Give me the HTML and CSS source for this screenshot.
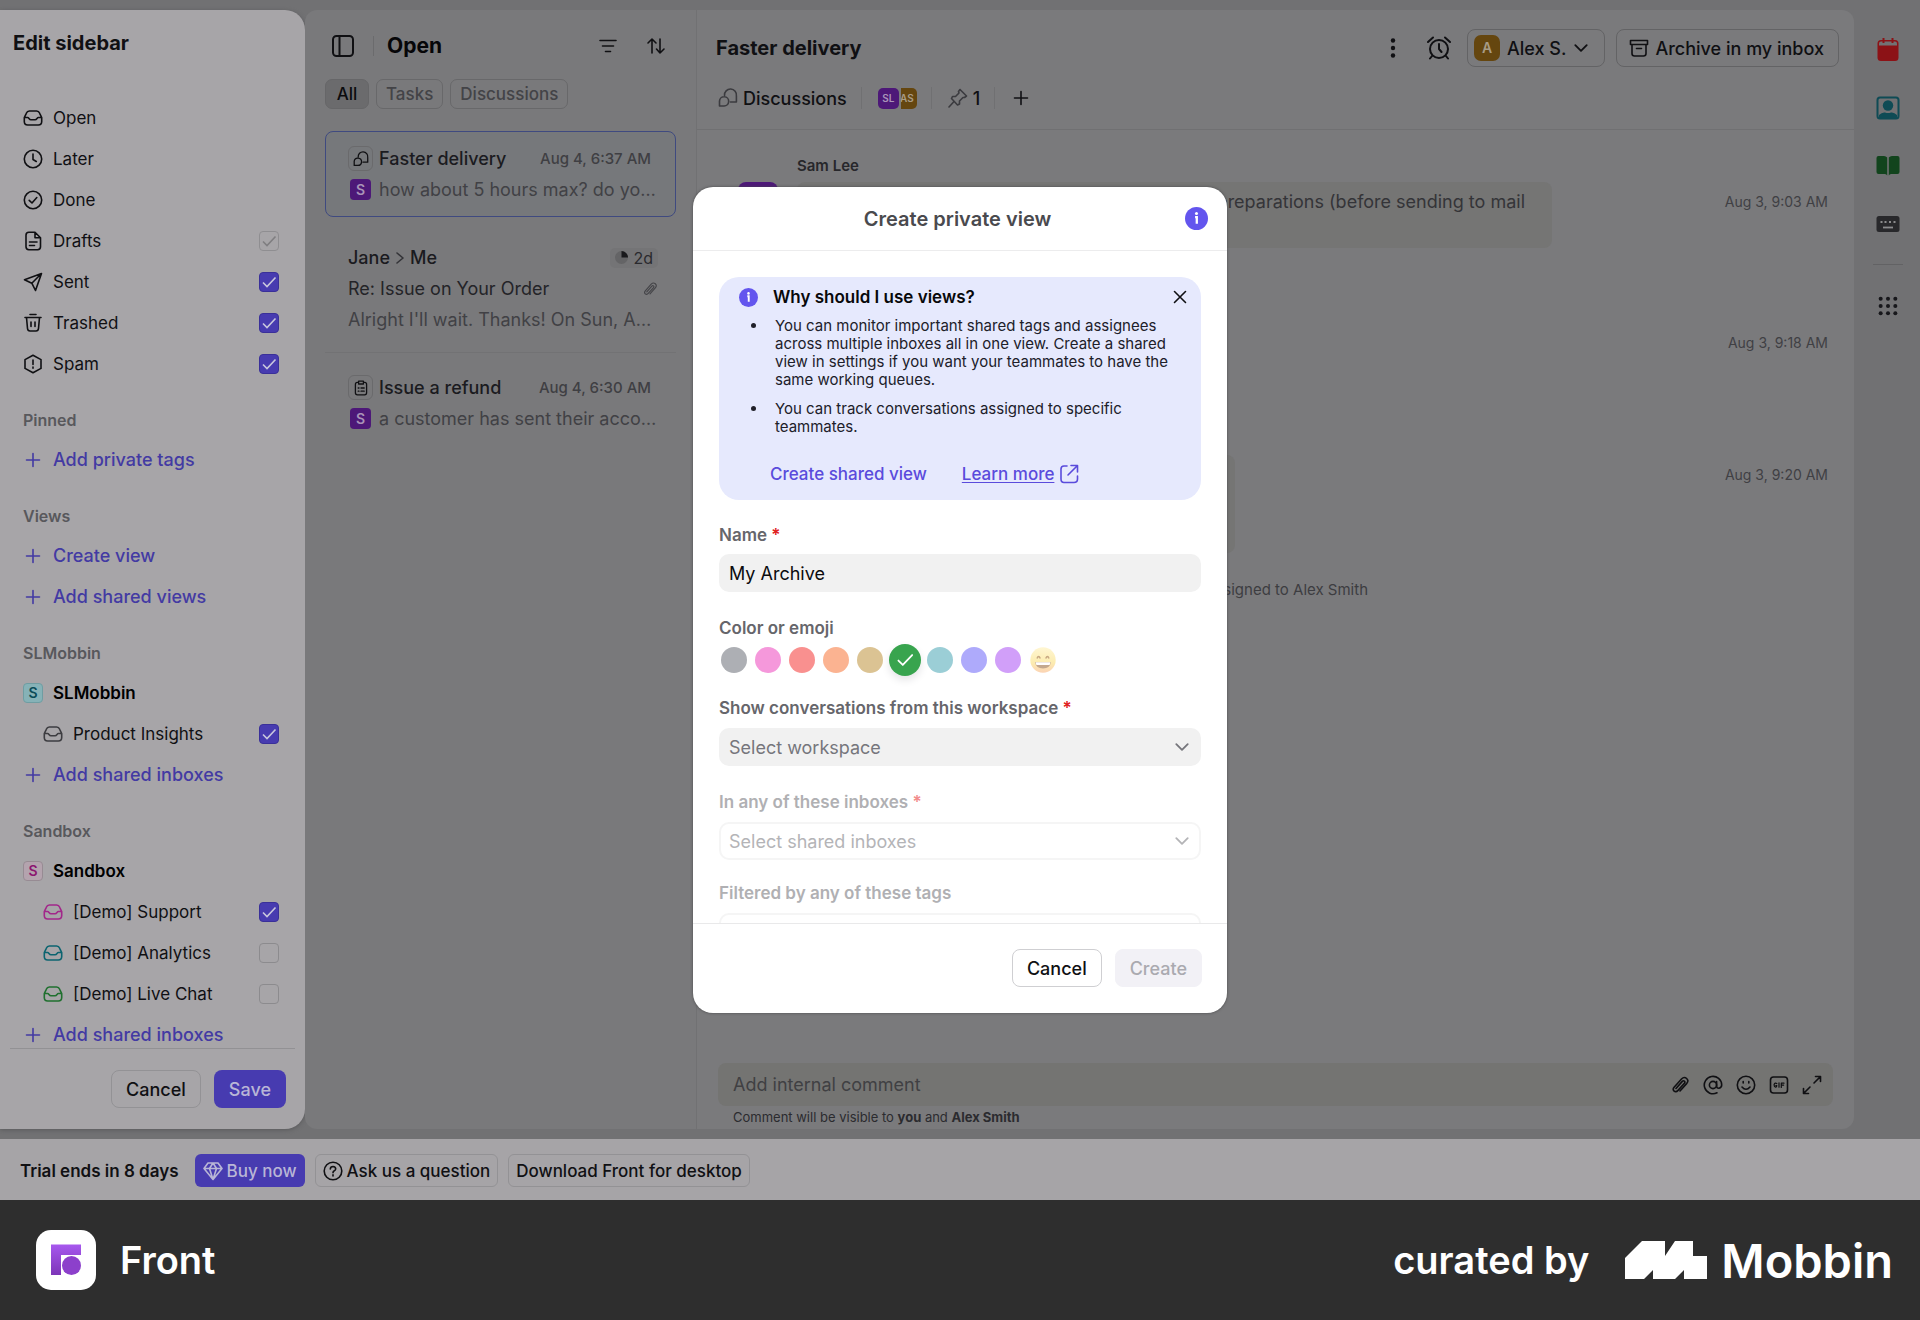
FILE: index.html
```html
<!DOCTYPE html>
<html lang="en">
<head>
<meta charset="utf-8">
<meta name="viewport" content="width=device-width, initial-scale=1">
<title>Front – Create private view</title>
<link rel="stylesheet" href="styles.css">
</head>
<body>
<svg class="defs" aria-hidden="true">
  <symbol id="inbox" viewBox="0 0 20 20"><path d="M1.3 9.6 3.3 5.3Q4.2 3 6.400 3H13.600Q15.800 3 16.700 5.300L18.700 9.600V13.600Q18.700 17 15.300 17H4.700Q1.300 17 1.300 13.600ZM1.500 9.500H4.600C6 9.500 6 11.700 8 11.700H12C14 11.700 14 9.500 15.400 9.500H18.500"/></symbol>
  <symbol id="plus" viewBox="0 0 20 20"><path d="M10 3.500V16.500M3.500 10H16.500"/></symbol>
  <symbol id="tick" viewBox="0 0 20 20"><path d="M4 10.500 8 14.500 16.500 5.500"/></symbol>
  <symbol id="chevron" viewBox="0 0 14 14"><path d="M2 4.500 7 9.500 12 4.500"/></symbol>
  <symbol id="bubbles" viewBox="0 0 20 20"><path d="M6.500 7.500A6 6 0 1 1 18.400 8V14H12.500M1.500 18V13A4.600 4.600 0 1 1 6 18Z"/></symbol>
  <symbol id="clip" viewBox="0 0 20 20"><path d="M6 13.500 12.300 6.400C13.700 4.900 15.700 6.700 14.400 8.200L7.800 15.600C5.300 18.400 1.700 15.100 4.100 12.300L11.500 4C15 0.300 20 4.800 16.600 8.600L10 16"/></symbol>
  <symbol id="info" viewBox="0 0 24 24"><circle cx="12" cy="12" r="12" fill="currentColor" stroke="none"/><path d="M10.500 10.500H12.300V17.500" stroke="#fff" stroke-width="2.400"/><circle cx="12" cy="6.800" r="1.600" fill="#fff" stroke="none"/></symbol>
</svg>

<div class="screen">
  <div class="workspace">
    <aside class="sidebar">
      <h1 class="sidebar-title">Edit sidebar</h1>
      <nav class="sidebar-nav">
        <ul class="section">
          <li class="row"><svg class="icon"><use href="#inbox"/></svg><span>Open</span></li>
          <li class="row"><svg class="icon" viewBox="0 0 20 20"><circle cx="10" cy="10" r="8.700"/><path d="M10 5V10.500L13.300 12.500"/></svg><span>Later</span></li>
          <li class="row"><svg class="icon" viewBox="0 0 20 20"><circle cx="10" cy="10" r="8.700"/><path d="M6.200 10.300 9 13 13.800 7.500"/></svg><span>Done</span></li>
          <li class="row"><svg class="icon" viewBox="0 0 20 20"><path d="M3 4.200Q3 1.300 5.900 1.300H12L17.500 6.800V15.800Q17.500 18.700 14.600 18.700H5.900Q3 18.700 3 15.800ZM12 1.500V6.800H17.200M6.500 11H14M6.500 14.500H11.500"/></svg><label for="c-drafts">Drafts</label><span class="tickbox"><input type="checkbox" id="c-drafts" checked disabled><svg><use href="#tick"/></svg></span></li>
          <li class="row"><svg class="icon" viewBox="0 0 20 20"><path d="M1.500 7.700 18.500 1.500 12.500 18.500 8.800 11.200ZM8.800 11.200 18.500 1.500"/></svg><label for="c-sent">Sent</label><span class="tickbox"><input type="checkbox" id="c-sent" checked><svg><use href="#tick"/></svg></span></li>
          <li class="row"><svg class="icon" viewBox="0 0 20 20"><path d="M2 4.500H18M7 1.500H13M3.500 4.500 4.500 15.500Q4.800 18 7 18H13Q15.200 18 15.500 15.500L16.500 4.500M8 9V13.500M12 9V13.500"/></svg><label for="c-trash">Trashed</label><span class="tickbox"><input type="checkbox" id="c-trash" checked><svg><use href="#tick"/></svg></span></li>
          <li class="row"><svg class="icon" viewBox="0 0 20 20"><path d="M10 1.300 18 5.600V14.400L10 18.700 2 14.400V5.600ZM10 6V10.500M10 13V14.300"/></svg><label for="c-spam">Spam</label><span class="tickbox"><input type="checkbox" id="c-spam" checked><svg><use href="#tick"/></svg></span></li>
        </ul>
        <h2 class="section-title">Pinned</h2>
        <ul class="section">
          <li><button class="row add"><svg class="icon"><use href="#plus"/></svg>Add private tags</button></li>
        </ul>
        <h2 class="section-title">Views</h2>
        <ul class="section">
          <li><button class="row add"><svg class="icon"><use href="#plus"/></svg>Create view</button></li>
          <li><button class="row add"><svg class="icon"><use href="#plus"/></svg>Add shared views</button></li>
        </ul>
        <h2 class="section-title">SLMobbin</h2>
        <ul class="section">
          <li class="row team"><span class="team-badge teal">S</span><span>SLMobbin</span></li>
          <li class="row nested"><svg class="icon muted"><use href="#inbox"/></svg><label for="c-prod">Product Insights</label><span class="tickbox"><input type="checkbox" id="c-prod" checked><svg><use href="#tick"/></svg></span></li>
          <li><button class="row add"><svg class="icon"><use href="#plus"/></svg>Add shared inboxes</button></li>
        </ul>
        <h2 class="section-title">Sandbox</h2>
        <ul class="section">
          <li class="row team"><span class="team-badge pink">S</span><span>Sandbox</span></li>
          <li class="row nested"><svg class="icon pink-ink"><use href="#inbox"/></svg><label for="c-sup">[Demo] Support</label><span class="tickbox"><input type="checkbox" id="c-sup" checked><svg><use href="#tick"/></svg></span></li>
          <li class="row nested"><svg class="icon teal-ink"><use href="#inbox"/></svg><label for="c-ana">[Demo] Analytics</label><span class="tickbox"><input type="checkbox" id="c-ana"></span></li>
          <li class="row nested"><svg class="icon green-ink"><use href="#inbox"/></svg><label for="c-chat">[Demo] Live Chat</label><span class="tickbox"><input type="checkbox" id="c-chat"></span></li>
          <li><button class="row add"><svg class="icon"><use href="#plus"/></svg>Add shared inboxes</button></li>
        </ul>
      </nav>
      <div class="sidebar-actions">
        <button class="btn outline">Cancel</button>
        <button class="btn primary">Save</button>
      </div>
    </aside>

    <section class="list">
      <header class="list-head">
        <button class="icon-btn" aria-label="Toggle sidebar"><svg class="icon large" viewBox="0 0 22 22"><rect x="1" y="1" width="20" height="20" rx="3.500"/><path d="M7.500 1V21"/></svg></button>
        <h2>Open</h2>
        <button class="icon-btn" aria-label="Filter"><svg class="icon" viewBox="0 0 20 20"><path d="M2 4.500H18M4.500 10H15.500M7.500 15.500H12.500"/></svg></button>
        <button class="icon-btn" aria-label="Sort"><svg class="icon" viewBox="0 0 20 20"><path d="M6 17V3M2 7 6 3 10 7M14 3V17M10.500 13 14 17 18 13"/></svg></button>
      </header>
      <div class="tabs">
        <button class="tab active">All</button>
        <button class="tab">Tasks</button>
        <button class="tab">Discussions</button>
      </div>
      <article class="item selected">
        <div class="line"><span class="kind"><svg class="icon small"><use href="#bubbles"/></svg></span><h3>Faster delivery</h3><time>Aug 4, 6:37 AM</time></div>
        <div class="line"><span class="avatar-s">S</span><p>how about 5 hours max? do yo…</p></div>
      </article>
      <article class="item thread-item">
        <div class="line"><h3>Jane</h3><svg class="icon arrow" viewBox="0 0 12 14"><path d="M3 2 9 7 3 12"/></svg><h3>Me</h3><span class="age"><svg viewBox="0 0 14 14"><circle cx="7" cy="7" r="7" fill="#646466"/><path d="M7 0A7 7 0 0 1 14 7H7Z" fill="#19191c"/></svg>2d</span></div>
        <div class="line subject"><p>Re: Issue on Your Order</p><svg class="icon clip"><use href="#clip"/></svg></div>
        <div class="line"><p>Alright I'll wait. Thanks! On Sun, A…</p></div>
      </article>
      <article class="item last">
        <div class="line"><span class="kind"><svg class="icon small" viewBox="0 0 20 20"><path d="M7 3H5.500Q3 3 3 5.500V16Q3 18.500 5.500 18.500H14.500Q17 18.500 17 16V5.500Q17 3 14.500 3H13M7 1.500H13V5H7ZM6.500 10H7.500M10 10H14M6.500 14H7.500M10 14H14"/></svg></span><h3>Issue a refund</h3><time>Aug 4, 6:30 AM</time></div>
        <div class="line"><span class="avatar-s">S</span><p>a customer has sent their acco…</p></div>
      </article>
    </section>

    <main class="conversation">
      <header class="conv-head">
        <div class="conv-title">
          <h2>Faster delivery</h2>
          <button class="icon-btn" aria-label="More"><svg class="icon" viewBox="0 0 20 20"><g fill="currentColor" stroke="none"><circle cx="10" cy="2.500" r="2.200"/><circle cx="10" cy="10" r="2.200"/><circle cx="10" cy="17.500" r="2.200"/></g></svg></button>
          <button class="icon-btn" aria-label="Snooze"><svg class="icon alarm" viewBox="0 0 24 24"><circle cx="12" cy="13" r="9"/><path d="M12 8V13L14.500 16M1 6 6 1.500M23 6 18 1.500M5 20 3 22.500M19 20 21 22.500"/></svg></button>
          <button class="btn outline assignee"><span class="avatar-a">A</span>Alex S.<svg class="icon chev"><use href="#chevron"/></svg></button>
          <button class="btn outline archive"><svg class="icon" viewBox="0 0 20 20"><path d="M1.500 2.500H18.500V6.500H1.500ZM3 6.500V15.500Q3 18 5.500 18H14.500Q17 18 17 15.500V6.500M7.500 10.500H12.500"/></svg>Archive in my inbox</button>
        </div>
        <div class="conv-meta">
          <a class="meta-link" href="#discussions"><svg class="icon"><use href="#bubbles"/></svg>Discussions</a>
          <span class="faces"><span class="face sl">SL</span><span class="face as">AS</span></span>
          <span class="pins"><svg class="icon" viewBox="0 0 20 20"><path d="M12 1.500 18.500 8 16.500 9.500 15 9.500 11.500 13 11.500 16 9.500 17 3.500 10.500 4.500 8.500 7.500 8.500 11 5 10.500 3.500ZM6 13.500 1 19"/></svg>1</span>
          <button class="icon-btn" aria-label="Add participant"><svg class="icon"><use href="#plus"/></svg></button>
        </div>
      </header>
      <div class="thread">
        <div class="author">Sam Lee</div>
        <div class="message first"><span class="portrait"></span><div class="bubble wide">preparations (before sending to mail</div><time>Aug 3, 9:03 AM</time></div>
        <div class="message second"><div class="bubble short"></div><time>Aug 3, 9:18 AM</time></div>
        <div class="message third"><div class="bubble tall"></div><time>Aug 3, 9:20 AM</time></div>
        <p class="event">assigned to Alex Smith</p>
      </div>
      <footer class="composer">
        <div class="composer-box">
          <input type="text" placeholder="Add internal comment" aria-label="Add internal comment">
          <button class="icon-btn" aria-label="Attach"><svg class="icon"><use href="#clip"/></svg></button>
          <button class="icon-btn" aria-label="Mention"><svg class="icon" viewBox="0 0 20 20"><circle cx="10" cy="10" r="3.600"/><path d="M13.600 6.500V11.500Q14 13.500 16 13.300Q18.700 12.500 18.700 10A8.700 8.700 0 1 0 14 17.800"/></svg></button>
          <button class="icon-btn" aria-label="Emoji"><svg class="icon" viewBox="0 0 20 20"><circle cx="10" cy="10" r="8.700"/><path d="M6 12Q10 16.500 14 12M7.200 6.500V8M12.800 6.500V8"/></svg></button>
          <button class="icon-btn" aria-label="GIF"><svg class="icon" viewBox="0 0 20 20"><rect x="1.500" y="2" width="17" height="16" rx="3"/><path stroke-width="1.200" d="M7.800 8.500Q6 7.300 5.200 9.200Q4.800 11.700 6.500 12.200Q7.800 12.200 7.800 10.500H6.800M10 7.800V12.200M12.300 12.400V8.200H15M12.300 10.200H14.600"/></svg></button>
          <button class="icon-btn" aria-label="Expand"><svg class="icon" viewBox="0 0 20 20"><path d="M12 8 18.500 1.500M13.500 1.500H18.500V6.500M8 12 1.500 18.500M1.500 13.500V18.500H6.500"/></svg></button>
        </div>
        <p>Comment will be visible to <b>you</b> and <b>Alex Smith</b></p>
      </footer>
    </main>

    <nav class="rail" aria-label="Plugins">
      <button class="icon-btn" aria-label="Calendar"><svg viewBox="0 0 24 24"><path d="M5 2H19Q22.500 2 22.500 5.500V19.500Q22.500 23 19 23H5Q1.500 23 1.500 19.500V5.500Q1.500 2 5 2Z" fill="#8c1216"/><path d="M3 7.500V5.500Q3 3.500 5 3.500H19Q21 3.500 21 5.500V7.500Z" fill="#727274"/><path d="M7.500 0V5M16.500 0V5" stroke="#8c1216" stroke-width="2"/></svg></button>
      <button class="icon-btn" aria-label="Contacts"><svg viewBox="0 0 24 24"><rect x="1.500" y="1.500" width="21" height="21" rx="2.500" fill="none" stroke="#0f4b55" stroke-width="2"/><circle cx="12" cy="9.500" r="5.200" fill="#0f4b55"/><path d="M3 22V19Q6 16 9 16.500Q12 17.500 15 16.500Q18 16 21 19V22Z" fill="#0f4b55"/></svg></button>
      <button class="icon-btn" aria-label="Knowledge base"><svg viewBox="0 0 24 24"><path d="M11.200 3.500Q10 2 8 2H2.500Q.5 2 .5 4V18Q.5 20 2.500 20H9Q10.500 20 11.200 21.500ZM12.800 3.500Q14 2 16 2H21.500Q23.500 2 23.500 4V18Q23.500 20 21.500 20H15Q13.500 20 12.800 21.500Z" fill="#12441d"/></svg></button>
      <button class="icon-btn" aria-label="Shortcuts"><svg viewBox="0 0 24 24"><rect x=".5" y="4" width="23" height="16" rx="2.500" fill="#28282b"/><path d="M7 15.500H17" stroke="#8b8b8d" stroke-width="1.800"/><path d="M4.500 10H6.500M8.500 10H10.500M13 10H15M17.500 10H19.500" stroke="#8b8b8d" stroke-width="1.800"/></svg></button>
      <hr>
      <button class="icon-btn" aria-label="Apps"><svg viewBox="0 0 24 24"><g fill="#17171b"><circle cx="4" cy="4" r="2.200"/><circle cx="12" cy="4" r="2.200"/><circle cx="20" cy="4" r="2.200"/><circle cx="4" cy="12" r="2.200"/><circle cx="12" cy="12" r="2.200"/><circle cx="20" cy="12" r="2.200"/><circle cx="4" cy="20" r="2.200"/><circle cx="12" cy="20" r="2.200"/><circle cx="20" cy="20" r="2.200"/></g></svg></button>
    </nav>
  </div>

  <div class="trial">
    <strong>Trial ends in 8 days</strong>
    <button class="btn primary"><svg class="icon" viewBox="0 0 20 20"><path d="M5 2H15L19 7.500 10 18.500 1 7.500ZM1 7.500H19M10 18.500 6.500 7.500 10 2 13.500 7.500Z"/></svg>Buy now</button>
    <button class="btn outline"><svg class="icon" viewBox="0 0 20 20"><circle cx="10" cy="10" r="8.800"/><path d="M7.300 8Q7.500 5.500 10 5.500Q12.700 5.700 12.700 8Q12.500 9.300 11 10Q10 10.500 10 11.700M10 13.700V15"/></svg>Ask us a question</button>
    <button class="btn outline">Download Front for desktop</button>
  </div>

  <div class="overlay">
    <form class="modal" role="dialog" aria-labelledby="modal-title">
      <header class="modal-head">
        <h2 id="modal-title">Create private view</h2>
        <button type="button" class="icon-btn" aria-label="About views"><svg><use href="#info"/></svg></button>
      </header>
      <div class="modal-body">
        <section class="callout">
          <header>
            <svg class="callout-icon"><use href="#info"/></svg>
            <h3>Why should I use views?</h3>
            <button type="button" class="icon-btn" aria-label="Dismiss"><svg class="icon" viewBox="0 0 14 14"><path d="M1.500 1.500 12.500 12.500M12.500 1.500 1.500 12.500"/></svg></button>
          </header>
          <ul>
            <li>You can monitor important shared tags and assignees<br>across multiple inboxes all in one view. Create a shared<br>view in settings if you want your teammates to have the<br>same working queues.</li>
            <li>You can track conversations assigned to specific<br>teammates.</li>
          </ul>
          <div class="callout-links">
            <a href="#shared">Create shared view</a>
            <a class="learn" href="#learn"><span>Learn more</span><svg class="icon" viewBox="0 0 20 20"><path d="M8 2H5Q2 2 2 5V15Q2 18.500 5 18.500H15Q18.500 18.500 18.500 15V12M12 1.500H18.500V8M18 2 9 11"/></svg></a>
          </div>
        </section>

        <label class="field-label" for="name">Name <i>*</i></label>
        <input class="field" id="name" type="text" value="My Archive">

        <fieldset class="colors">
          <legend class="field-label">Color or emoji</legend>
          <div class="swatches">
            <input type="radio" name="color" class="sw gray" aria-label="Gray">
            <input type="radio" name="color" class="sw pink" aria-label="Pink">
            <input type="radio" name="color" class="sw red" aria-label="Red">
            <input type="radio" name="color" class="sw orange" aria-label="Orange">
            <input type="radio" name="color" class="sw tan" aria-label="Tan">
            <span class="picked"><input type="radio" name="color" class="sw green" aria-label="Green" checked><svg class="icon"><use href="#tick"/></svg></span>
            <input type="radio" name="color" class="sw aqua" aria-label="Teal">
            <input type="radio" name="color" class="sw blue" aria-label="Blue">
            <input type="radio" name="color" class="sw purple" aria-label="Purple">
            <button type="button" class="icon-btn emoji" aria-label="Emoji"><svg viewBox="0 0 26 26"><defs><linearGradient id="face" x2="0" y2="1"><stop offset="0" stop-color="#fff6d2"/><stop offset=".6" stop-color="#fcecb0"/><stop offset="1" stop-color="#fbd3b4"/></linearGradient></defs><circle cx="13" cy="13" r="12.700" fill="url(#face)"/><path d="M7 11.500Q8.500 7.500 10.300 11.500M15.700 11.500Q17.500 7.500 19 11.500" fill="none" stroke="#c8a983" stroke-width="1.500"/><path d="M5 15H21Q20 21.500 13 21.500Q6 21.500 5 15Z" fill="#c3a88e"/><path d="M5.500 15.300H20.500L19.600 18H6.400Z" fill="#fff"/></svg></button>
          </div>
        </fieldset>

        <label class="field-label" for="workspace">Show conversations from this workspace <i>*</i></label>
        <div class="select"><select class="field" id="workspace"><option>Select workspace</option></select><svg class="icon chev"><use href="#chevron"/></svg></div>

        <div class="inactive">
          <label class="field-label" for="inboxes">In any of these inboxes <i>*</i></label>
          <div class="select"><select class="field" id="inboxes" disabled><option>Select shared inboxes</option></select><svg class="icon chev"><use href="#chevron"/></svg></div>
          <label class="field-label" for="tags">Filtered by any of these tags</label>
          <div class="select"><select class="field" id="tags" disabled></select></div>
        </div>
      </div>
      <footer class="modal-foot">
        <button type="button" class="btn">Cancel</button>
        <button type="submit" class="btn" disabled>Create</button>
      </footer>
    </form>
  </div>
</div>

<footer class="credit">
  <svg class="logo" viewBox="0 0 60 60"><defs><linearGradient id="front" x2="0" y2="1"><stop offset="0" stop-color="#a758ee"/><stop offset="1" stop-color="#7d35b8"/></linearGradient></defs><rect width="60" height="60" rx="15" fill="#fff"/><path d="M15 14.500H45V25H25V45H15Z" fill="url(#front)"/><circle cx="35.500" cy="35.500" r="9.500" fill="#8c40cb"/></svg>
  <span class="product">Front</span>
  <span class="curated">curated by</span>
  <a class="mobbin" href="#mobbin"><svg viewBox="0 0 82 38"><path d="M0 38V17L17 0H40V15L50 0H68V15H82V38H59V29L50 38H28V29L19 38Z"/></svg>Mobbin</a>
</footer>
</body>
</html>
```
FILE: styles.css
```css
* { box-sizing: border-box; }

html, body { height: 100%; }

body {
  margin: 0;
  display: flex;
  flex-direction: column;
  background: #2e2e2e;
  color: #101013;
  font-family: Inter, "Liberation Sans", sans-serif;
  font-size: 17px;
}

h1, h2, h3, p, ul { margin: 0; padding: 0; font-size: inherit; font-weight: inherit; }
ul { list-style: none; }
button, input, select { font: inherit; color: inherit; }
button { cursor: pointer; white-space: nowrap; }
.defs { display: none; }

.icon {
  width: 20px;
  height: 20px;
  flex: none;
  fill: none;
  stroke: currentColor;
  stroke-width: 1.6;
  stroke-linecap: round;
  stroke-linejoin: round;
}
.icon.small { width: 16px; height: 16px; }
.icon.large { width: 22px; height: 22px; stroke-width: 2; }
.icon.chev { width: 16px; height: 16px; }

.icon-btn {
  display: grid;
  place-items: center;
  padding: 0;
  border: 0;
  background: none;
}

.btn {
  display: flex;
  align-items: center;
  justify-content: center;
  height: 38px;
  padding: 0 14px;
  border: 1px solid transparent;
  border-radius: 8px;
  background: none;
  font-size: 18px;
  font-weight: 500;
}
.btn.outline { border-color: #939295; }
.btn.primary { background: #473bb0; color: #b9b6d6; }

/* Window */
.screen {
  position: relative;
  flex: 1;
  min-height: 0;
  display: flex;
  flex-direction: column;
}
.workspace {
  flex: 1;
  min-height: 0;
  display: flex;
  padding: 10px 0;
  background: #717173;
}

/* Sidebar */
.sidebar {
  flex: none;
  width: 305px;
  display: flex;
  flex-direction: column;
  border-radius: 0 20px 20px 0;
  background: #a7a5a8;
  box-shadow: 0 1px 4px #5a5a5c;
}
.sidebar-title {
  padding: 0 13px;
  line-height: 66px;
  font-size: 20px;
  font-weight: 700;
}
.sidebar-nav {
  flex: 1;
  min-height: 0;
  overflow: hidden;
  margin: 0 10px;
  padding-top: 21px;
  border-bottom: 1px solid #929194;
}
.row {
  display: flex;
  align-items: center;
  gap: 10px;
  height: 41px;
  padding: 0 16px 0 13px;
}
.row .tickbox { margin-left: auto; }
.nested { padding-left: 33px; }
.team { font-weight: 600; color: #000; }
.add {
  width: 100%;
  border: 0;
  background: none;
  color: #433aa3;
  font-size: 18px;
  font-weight: 500;
}
.section-title {
  margin-top: 18px;
  padding-left: 13px;
  color: #58585c;
  font-size: 16px;
  font-weight: 600;
  line-height: 37px;
}
.team-badge {
  width: 20px;
  height: 20px;
  border: 1px solid;
  border-radius: 4px;
  font-size: 14px;
  line-height: 18px;
  text-align: center;
}
.team-badge.teal { background: #86b2b7; border-color: #6f9da2; color: #0b4c57; }
.team-badge.pink { background: #b4a3ae; border-color: #978b93; color: #8c1570; }
.muted { color: #3d3d41; }
.pink-ink { color: #a2278a; }
.teal-ink { color: #0c6470; }
.green-ink { color: #20702f; }

.tickbox, .picked { display: grid; place-items: center; }
.tickbox > *, .picked > * { grid-area: 1 / 1; }
.tickbox input {
  appearance: none;
  width: 20px;
  height: 20px;
  margin: 0;
  border: 1px solid #8c8b8e;
  border-radius: 4px;
}
.tickbox input:checked { border-color: #3a3099; background: #473bb0; }
.tickbox input:disabled { border-color: #8f8e91; background: none; }
.tickbox svg {
  width: 20px;
  height: 20px;
  fill: none;
  stroke: #c9c7dd;
  stroke-width: 1.6;
  pointer-events: none;
}
.tickbox input:disabled + svg { stroke: #7f7e81; }

.sidebar-actions {
  display: flex;
  justify-content: flex-end;
  gap: 13px;
  padding: 21px 19px 21px 0;
}

/* Conversation list */
.list {
  flex: none;
  width: 391px;
  padding: 0 20px;
  border-radius: 12px 0 0 12px;
  background: #79797b;
  font-size: 19px;
}
.list-head {
  display: flex;
  align-items: center;
  gap: 19px;
  height: 71px;
  padding: 0 10px 0 7px;
}
.list-head h2 {
  margin-right: auto;
  padding-left: 13px;
  border-left: 1px solid #6b6b6d;
  color: #060608;
  font-size: 21px;
  font-weight: 700;
  line-height: 20px;
}
.list-head .icon-btn:last-child { margin-left: 9px; }
.tabs { display: flex; gap: 7px; margin: -2px 0 22px; }
.tab {
  min-width: 44px;
  height: 30px;
  padding: 0 9px;
  border: 1px solid #68686a;
  border-radius: 7px;
  background: none;
  color: #434347;
  font-weight: 500;
  font-size: 17px;
}
.tab.active { border-color: #666668; background: #6b6b6d; color: #0b0b0d; }

.item { padding: 12px 25px 12px 23px; }
.item.selected {
  padding: 11px 24px 11px 22px;
  border: 1px solid #3f4a80;
  border-radius: 8px;
  background: #76787b;
}
.thread-item { margin-top: 13px; padding: 12px 18px 17px 23px; border-bottom: 1px solid #727274; }
.item.last { padding-top: 19px; }
.line { display: flex; align-items: center; gap: 6px; height: 31px; white-space: nowrap; }
.line h3 { color: #1b1b1f; font-weight: 500; font-size: 18px; }
.line p { color: #414145; font-size: 18px; }
.subject p { color: #242428; }
.line time { margin-left: auto; color: #3f3f43; font-size: 15px; font-weight: 500; }
.kind {
  flex: none;
  display: grid;
  place-items: center;
  width: 25px;
  height: 25px;
  border: 1px solid #6a6a6c;
  border-radius: 6px;
}
.avatar-s {
  flex: none;
  width: 21px;
  height: 21px;
  margin: 0 2px;
  border-radius: 4px;
  background: #4d1878;
  color: #a994b8;
  font-size: 14px;
  font-weight: 600;
  line-height: 21px;
  text-align: center;
}
.icon.arrow { width: 12px; height: 14px; margin: 0 -2px; color: #343438; }
.age {
  display: flex;
  align-items: center;
  gap: 5px;
  height: 20px;
  margin-left: auto;
  padding: 0 5px;
  border-radius: 5px;
  background: #747476;
  color: #2a2a2e;
  font-size: 16px;
}
.age svg { width: 13px; height: 13px; }
.icon.clip { width: 16px; height: 16px; margin-left: auto; color: #444448; stroke-width: 1.4; }

/* Conversation */
.conversation {
  flex: 1;
  min-width: 0;
  display: flex;
  flex-direction: column;
  border-left: 1px solid #717173;
  border-radius: 0 12px 12px 0;
  background: #7a7a7c;
}
.conv-head { padding: 19px 15px 16px 19px; border-bottom: 1px solid #707072; }
.conv-title { display: flex; align-items: center; gap: 11px; }
.conv-title h2 { margin-right: auto; font-size: 20px; font-weight: 700; }
.conv-title .icon-btn { margin-right: 13px; }
.conv-title .icon-btn + .icon-btn { margin-right: 5px; }
.conv-title .outline { border-color: #636365; }
.icon.alarm { width: 24px; height: 24px; stroke-width: 2; }
.assignee { gap: 7px; padding: 0 15px 0 6px; }
.archive { gap: 6px; padding: 0 14px 0 12px; }
.avatar-a {
  width: 26px;
  height: 26px;
  border-radius: 7px;
  background: #65460f;
  color: #a89c86;
  font-size: 14px;
  font-weight: 600;
  line-height: 26px;
}
.conv-meta {
  display: flex;
  align-items: center;
  gap: 14px;
  height: 30px;
  margin-top: 16px;
  padding-left: 2px;
  font-size: 18px;
  font-weight: 500;
}
.meta-link { display: flex; gap: 5px; color: inherit; text-decoration: none; }
.meta-link .icon, .pins .icon { color: #3b3b3f; }
.faces, .pins, .conv-meta .icon-btn { display: flex; height: 22px; align-items: center; padding-left: 16px; border-left: 1px solid #707072; }
.pins { gap: 5px; }
.faces { gap: 2px; }
.face { display: block; width: 21px; height: 21px; border-radius: 5px; font-size: 10px; line-height: 21px; font-weight: 600; text-align: center; }
.face.sl { background: #4d1878; color: #a994b8; }
.face.as {
  display: flex;
  justify-content: flex-end;
  width: 16px;
  padding-right: 3px;
  overflow: hidden;
  border-radius: 0 5px 5px 0;
  background: #65460f;
  color: #a89c86;
}

.thread { flex: 1; padding: 26px 26px 0 41px; font-size: 18px; }
.author { margin: 0 0 6px 59px; color: #27272b; font-size: 15px; font-weight: 600; line-height: 20px; }
.message { display: flex; align-items: flex-start; padding-left: 59px; }
.message time { margin-left: auto; color: #404044; font-size: 14px; line-height: 40px; }
.message.first { gap: 19px; padding-left: 0; }
.message.second { margin-top: 75px; }
.message.third { margin-top: 90px; }
.portrait { width: 40px; height: 40px; border-radius: 8px; background: #4d1878; }
.bubble { border-radius: 8px; background: #757574; color: #343438; line-height: 24px; }
.bubble.wide { width: 755px; height: 66px; padding: 8px 27px; text-align: right; }
.bubble.short { width: 380px; height: 42px; }
.bubble.tall { width: 438px; height: 98px; }
.event { width: 630px; margin-top: 27px; color: #3d3d41; font-size: 15px; line-height: 20px; text-align: right; }

.composer { padding: 0 21px 1px; }
.composer-box {
  display: flex;
  align-items: center;
  gap: 13px;
  height: 43px;
  padding: 0 11px 0 15px;
  border-radius: 8px;
  background: #747472;
}
.composer-box input { flex: 1; min-width: 0; padding: 0; border: 0; outline: 0; background: none; font-size: 18px; }
.composer-box input::placeholder { color: #404043; opacity: 1; }
.composer p { padding-left: 15px; color: #2b2b2f; font-size: 13px; line-height: 22px; }

/* Plugin rail */
.rail {
  flex: none;
  width: 66px;
  display: flex;
  flex-direction: column;
  align-items: center;
  gap: 34px;
  padding: 28px 0 0 2px;
}
.rail .icon-btn svg { width: 24px; height: 24px; }
.rail hr { width: 30px; margin: -6px 0 -4px; border: 0; border-top: 1px solid #626264; }
.rail .icon-btn:last-child svg { width: 22px; height: 22px; }

/* Trial bar */
.trial {
  flex: none;
  display: flex;
  align-items: center;
  gap: 10px;
  height: 61px;
  padding: 2px 0 0 20px;
  background: #a6a4a7;
}
.trial strong { margin-right: 6px; font-weight: 600; }
.trial .btn { gap: 4px; height: 33px; padding: 0 7px; border-radius: 6px; font-size: 17px; }

/* Dialog */
.overlay {
  position: absolute;
  inset: 0;
  display: grid;
  place-items: center;
}
.modal {
  width: 534px;
  max-width: 100%;
  max-height: 826px;
  display: flex;
  flex-direction: column;
  border-radius: 20px;
  background: #fff;
  box-shadow: 0 0 3px #48484a;
}
.modal-head {
  flex: none;
  display: flex;
  align-items: center;
  height: 64px;
  padding: 0 19px 0 37px;
  border-bottom: 1px solid #ececed;
}
.modal-head h2 { flex: 1; color: #4a4a4e; font-size: 20px; font-weight: 600; text-align: center; }
.modal-head .icon-btn { color: #6355ee; }
.modal-head svg { width: 23px; height: 23px; fill: none; }
.modal-body { flex: 1; min-height: 0; overflow: hidden; padding: 26px 26px 0; }

.callout { margin-bottom: 25px; padding: 10px 14px 15px 20px; border-radius: 20px; background: #e6e9fd; }
.callout header { display: flex; align-items: center; height: 20px; }
.callout-icon { width: 19px; height: 19px; color: #6355ee; fill: none; }
.callout h3 { flex: 1; margin-left: 15px; font-weight: 600; color: #08080a; }
.callout .icon-btn .icon { width: 14px; height: 14px; }
.callout ul { margin-top: 10px; padding-left: 29px; list-style: disc; color: #202029; font-size: 15px; line-height: 18px; white-space: nowrap; }
.callout li { padding-left: 7px; }
.callout li + li { margin-top: 11px; }
.callout-links { display: flex; gap: 35px; margin: 27px 0 0 31px; line-height: 22px; font-weight: 500; }
.callout-links a { color: #5a4bdc; text-decoration: none; }
.learn { display: flex; align-items: center; gap: 5px; }
.learn span { text-decoration: underline; text-underline-offset: 2px; }

.field-label { display: block; padding: 0; color: #66666b; font-size: 17px; font-weight: 600; line-height: 20px; }
.field-label i { color: #e02020; font-style: normal; }
.field {
  width: 100%;
  height: 38px;
  margin: 9px 0 26px;
  padding: 0 10px;
  border: 0;
  border-radius: 10px;
  background: #f1f1f1;
  color: #0c0c0e;
  font-size: 18px;
}
.colors { margin: 0; padding: 0; border: 0; }
.swatches { display: flex; align-items: center; gap: 8px; height: 32px; margin: 6px 0 22px 2px; }
.sw { appearance: none; width: 26px; height: 26px; margin: 0; border-radius: 50%; }
.sw.gray { background: #adafb4; }
.sw.pink { background: #f598db; }
.sw.red { background: #f9908f; }
.sw.orange { background: #fbb391; }
.sw.tan { background: #dbc393; }
.sw.green { width: 32px; height: 32px; background: #38a44e; box-shadow: 0 4px 8px #e4e4e6; }
.sw.aqua { background: #9bced6; }
.sw.blue { background: #aeaafb; }
.sw.purple { background: #d19ff9; }
.picked { margin: 0 -2px; color: #fff; }
.picked .icon { width: 22px; height: 22px; pointer-events: none; z-index: 1; }
.emoji { margin-left: 1px; }
.emoji svg { width: 26px; height: 26px; }

.select { display: grid; align-items: center; grid-template-columns: 1fr 27px; margin: 10px 0 26px; color: #76767c; }
.select .field { grid-area: 1 / 1 / 2 / 3; margin: 0; appearance: none; color: #76767c; opacity: 1; }
.select .chev { grid-area: 1 / 2; pointer-events: none; z-index: 1; }
.inactive .field-label { color: #b0b0b3; }
.inactive i { color: #f28b8b; }
.inactive .select { margin-bottom: 23px; color: #b4b4b7; }
.inactive .field { border: 2px solid #f5f5f5; padding: 0 8px; background: #fff; color: #b4b4b7; }

.modal-foot {
  flex: none;
  display: flex;
  justify-content: flex-end;
  gap: 13px;
  padding: 25px 25px 26px;
  border-top: 1px solid #e9e9ea;
}
.modal-foot .btn { border-color: #cfcfd2; }
.modal-foot .btn:disabled { border-color: #f2f1f6; background: #f2f1f6; color: #aaaab0; }

/* Attribution strip */
.credit {
  flex: none;
  display: flex;
  align-items: center;
  height: 120px;
  padding: 0 27px 0 36px;
  background: #2e2e2e;
  color: #fff;
  font-size: 38px;
  font-weight: 600;
}
.logo { width: 60px; height: 60px; margin-right: 24px; }
.curated { margin: 0 36px 0 auto; }
.mobbin { display: flex; align-items: center; gap: 14px; color: inherit; font-size: 47px; font-weight: 600; text-decoration: none; }
.mobbin svg { width: 82px; height: 38px; fill: currentColor; }
```
